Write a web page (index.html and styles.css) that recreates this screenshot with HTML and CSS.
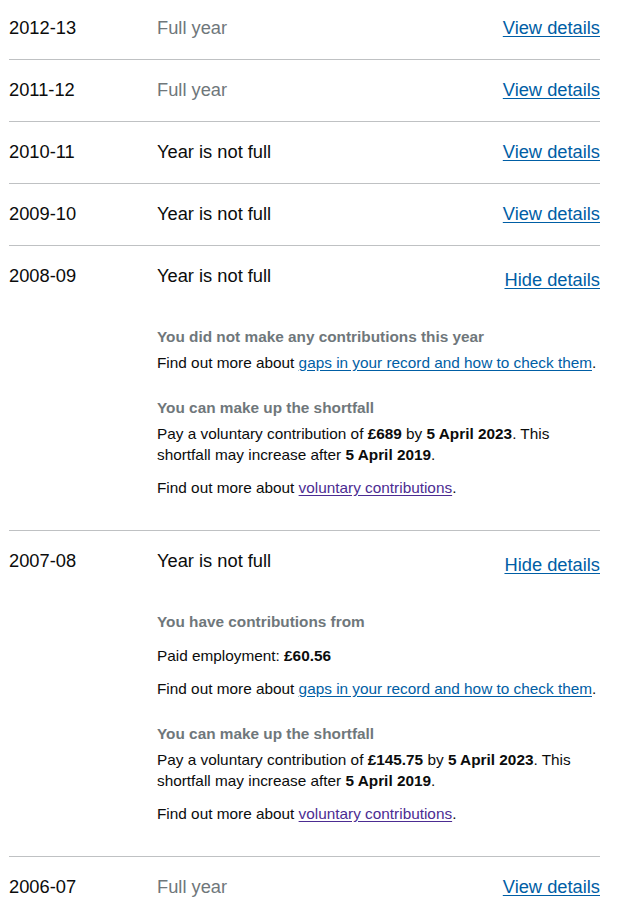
FILE: index.html
```html
<!DOCTYPE html>
<html lang="en">
<head>
    <meta charset="UTF-8">
    <meta name="viewport" content="width=device-width, initial-scale=1.0">
    <title>National Insurance record</title>
    <link rel="stylesheet" href="styles.css">
</head>
<body>
    <div class="years">
        <div class="year">
            <div class="year__row">
                <span class="year__label">2012-13</span>
                <span class="year__status year__status--full">Full year</span>
                <a class="year__toggle" href="#">View details</a>
            </div>
        </div>

        <div class="year">
            <div class="year__row">
                <span class="year__label">2011-12</span>
                <span class="year__status year__status--full">Full year</span>
                <a class="year__toggle" href="#">View details</a>
            </div>
        </div>

        <div class="year">
            <div class="year__row">
                <span class="year__label">2010-11</span>
                <span class="year__status">Year is not full</span>
                <a class="year__toggle" href="#">View details</a>
            </div>
        </div>

        <div class="year">
            <div class="year__row">
                <span class="year__label">2009-10</span>
                <span class="year__status">Year is not full</span>
                <a class="year__toggle" href="#">View details</a>
            </div>
        </div>

        <div class="year year--open">
            <div class="year__row">
                <span class="year__label">2008-09</span>
                <span class="year__status">Year is not full</span>
                <a class="year__toggle" href="#">Hide details</a>
            </div>
            <div class="year__details">
                <div class="detail">
                    <h3 class="detail__title">You did not make any contributions this year</h3>
                    <p>Find out more about <a href="#">gaps in your record and how to check them</a>.</p>
                </div>
                <div class="detail">
                    <h3 class="detail__title">You can make up the shortfall</h3>
                    <p>Pay a voluntary contribution of <strong>£689</strong> by <strong>5 April 2023</strong>. This shortfall may increase after <strong>5 April 2019</strong>.</p>
                    <p>Find out more about <a class="visited" href="#">voluntary contributions</a>.</p>
                </div>
            </div>
        </div>

        <div class="year year--open">
            <div class="year__row">
                <span class="year__label">2007-08</span>
                <span class="year__status">Year is not full</span>
                <a class="year__toggle" href="#">Hide details</a>
            </div>
            <div class="year__details">
                <div class="detail">
                    <h3 class="detail__title detail__title--spaced">You have contributions from</h3>
                    <p>Paid employment: <strong>£60.56</strong></p>
                    <p>Find out more about <a href="#">gaps in your record and how to check them</a>.</p>
                </div>
                <div class="detail">
                    <h3 class="detail__title">You can make up the shortfall</h3>
                    <p>Pay a voluntary contribution of <strong>£145.75</strong> by <strong>5 April 2023</strong>. This shortfall may increase after <strong>5 April 2019</strong>.</p>
                    <p>Find out more about <a class="visited" href="#">voluntary contributions</a>.</p>
                </div>
            </div>
        </div>

        <div class="year">
            <div class="year__row">
                <span class="year__label">2006-07</span>
                <span class="year__status year__status--full">Full year</span>
                <a class="year__toggle" href="#">View details</a>
            </div>
        </div>
    </div>
</body>
</html>
```

FILE: styles.css
```css
body {
    margin: 0;
    background: #fff;
    color: #0b0c0c;
    font-family: "Liberation Sans", Arial, sans-serif;
}

a {
    color: #005ea5;
    text-decoration: underline;
    text-underline-offset: 2px;
}

a.visited {
    color: #4c2c92;
}

.years {
    width: 591px;
    margin: -2px 0 0 9px;
}

.year {
    border-bottom: 1px solid #bfc1c3;
}

.year__row {
    display: flex;
    align-items: flex-start;
    padding: 17px 0 19px;
    font-size: 18.3px;
    line-height: 25px;
}

.year__label {
    flex: 0 0 148px;
}

.year__status {
    flex: 1;
}

.year__status--full {
    color: #6f777b;
}

.year--open .year__toggle {
    margin-top: 4px;
}

.year__details {
    padding: 15px 0 20px 148px;
    font-size: 15.35px;
    line-height: 21px;
}

/* p margin collapses into this one */
.detail + .detail {
    margin-top: 24px;
}

.detail__title {
    margin: 0 0 5px;
    font-size: 15.35px;
    font-weight: bold;
    color: #6f777b;
}

.detail__title--spaced {
    margin-bottom: 13px;
}

.detail p {
    margin: 0 0 12px;
}

.detail strong {
    font-weight: bold;
}
```
